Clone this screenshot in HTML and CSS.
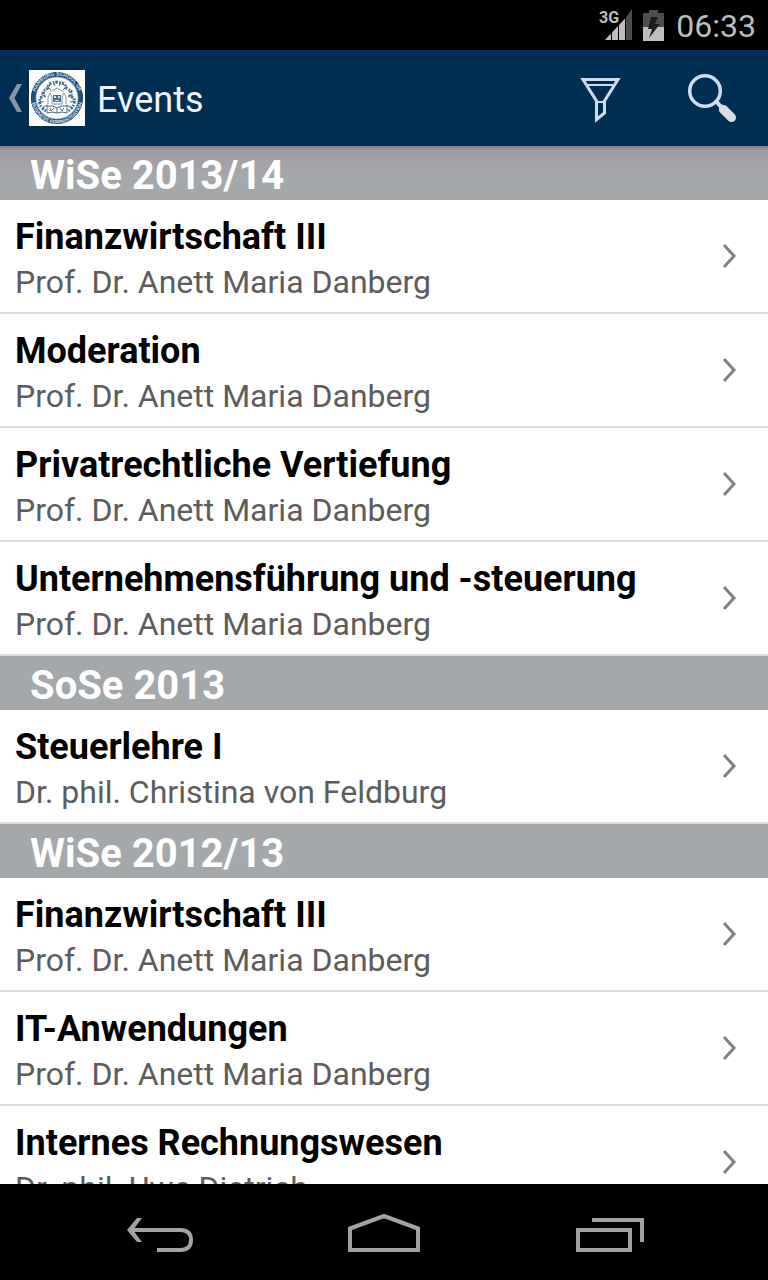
FILE: index.html
```
<!DOCTYPE html>
<html lang="de">
<head>
    <meta charset="UTF-8">
    <meta name="viewport" content="width=device-width, initial-scale=1.0">
    <title>Events</title>
    <link rel="stylesheet" href="styles.css">
</head>
<body>
    <!-- Status Bar -->
    <div class="status-bar">
        <svg class="signal" width="34" height="34" viewBox="0 0 34 34" aria-hidden="true">
            <text x="0" y="15">3G</text>
            <path fill="#bebebe" d="M6 32L12 25.500V32zM13 24.500L19 18V32H13zM20 17L26 10.500V32H20z"/>
            <path fill="#4d4d4d" d="M27 9.500L33 1V32H27z"/>
        </svg>
        <svg class="battery" width="21" height="32" viewBox="0 0 21 32" aria-hidden="true">
            <path fill="#4d4d4d" d="M0 4H6V1H15V4H21V18H0z"/>
            <path fill="#bebebe" d="M0 18H21V32H0z"/>
            <path fill="#1c1c1c" d="M8 8H15L12 15H17L6 29L9 20H5z"/>
        </svg>
        <span class="clock">06:33</span>
    </div>

    <!-- App Bar -->
    <header class="app-bar">
        <button class="up" type="button" aria-label="Zurück">
            <svg width="29" height="56" viewBox="0 0 29 56" aria-hidden="true">
                <path fill="#8296aa" d="M17 14H22L14.500 28L22 42H17L9 28z"/>
            </svg>
            <svg class="seal" width="56" height="56" viewBox="0 0 56 56" aria-hidden="true">
                <defs>
                    <path id="ring-top" d="M5.500 28A22.500 22.500 0 0 1 50.500 28"/>
                    <path id="ring-bottom" d="M2.500 28A25.500 25.500 0 0 0 53.500 28"/>
                </defs>
                <rect width="56" height="56" fill="#fff"/>
                <circle cx="28" cy="28" r="23.500" fill="none" stroke="#24507c" stroke-width="4.500"/>
                <circle cx="28" cy="28" r="25.500" fill="none" stroke="#123a66"/>
                <circle cx="28" cy="28" r="21" fill="none" stroke="#4a6e93" stroke-width="0.500"/>
                <text><textPath href="#ring-top" startOffset="50%">HAMBURG SCHOOL OF</textPath></text>
                <text><textPath href="#ring-bottom" startOffset="50%">BUSINESS ADMINISTRATION</textPath></text>
                <g fill="none" stroke="#4a6e93">
                    <path stroke-width="3" stroke-dasharray="1.500 1 2.500 1.500" d="M17 41Q9 36 11 28L15 26L14 21L19 18L20 14L28 12L36 14L37 18L42 21L41 26L45 28Q47 36 39 41"/>
                    <path stroke-width="1" d="M12 24L17 27M10 31L15 32M14 37L19 35M18 16L22 20M24 11L26 16M44 24L39 27M46 31L41 32M42 37L37 35M38 16L34 20M32 11L30 16"/>
                    <path stroke-width="1" d="M18 36V43Q23 41 28 43Q33 41 38 43V36Q33 35 28 38Q23 35 18 36M28 38V43M21 38L22 41L25 38M31 38L33 41L35 38"/>
                    <path stroke-width="1" stroke="#7d99b5" d="M19 34V27L21 23L23 27V34M33 34V27L35 23L37 27V34M21 22L28 18L35 22M23 34H33"/>
                </g>
                <path fill="#4a6e93" d="M24 25H32V32H24z"/>
                <path fill="#dce5ee" d="M25 26H27V28H25zM29 26H31V28H29zM26 30H30V31H26z"/>
            </svg>
        </button>
        <h1 class="title">Events</h1>
        <button class="action" type="button" aria-label="Filter">
            <svg width="56" height="56" viewBox="0 0 56 56" aria-hidden="true">
                <g fill="none" stroke="#cddcee" stroke-width="3">
                    <path d="M11 9.500H46L32.500 31V43L24.500 49.500V31z"/>
                    <path stroke-width="2" d="M13 15H44"/>
                    <path stroke-width="2" d="M25 32H32"/>
                </g>
            </svg>
        </button>
        <button class="action" type="button" aria-label="Suchen">
            <svg width="56" height="56" viewBox="0 0 56 56" aria-hidden="true">
                <circle cx="21" cy="21" r="15.300" fill="none" stroke="#cddcee" stroke-width="3.500"/>
                <path stroke="#cddcee" stroke-width="4" d="M32 31L37 37"/>
                <path stroke="#d7dde4" stroke-width="9" stroke-linecap="round" d="M40 40L47.500 47.500"/>
                <path fill="#d7dde4" d="M35 36L36 34L43 36L37 43L35 41z"/>
            </svg>
        </button>
    </header>

    <!-- Event List -->
    <main class="events">
        <section>
            <h2 class="semester">WiSe 2013/14</h2>
            <ul class="event-list">
                <li><a class="event" href="#">
                    <span class="event-text"><span class="event-name">Finanzwirtschaft III</span><span class="lecturer">Prof. Dr. Anett Maria Danberg</span></span>
                    <svg class="chevron" viewBox="0 0 16 26" aria-hidden="true"><path d="M2 2L12 13L2 24"/></svg>
                </a></li>
                <li><a class="event" href="#">
                    <span class="event-text"><span class="event-name">Moderation</span><span class="lecturer">Prof. Dr. Anett Maria Danberg</span></span>
                    <svg class="chevron" viewBox="0 0 16 26" aria-hidden="true"><path d="M2 2L12 13L2 24"/></svg>
                </a></li>
                <li><a class="event" href="#">
                    <span class="event-text"><span class="event-name">Privatrechtliche Vertiefung</span><span class="lecturer">Prof. Dr. Anett Maria Danberg</span></span>
                    <svg class="chevron" viewBox="0 0 16 26" aria-hidden="true"><path d="M2 2L12 13L2 24"/></svg>
                </a></li>
                <li><a class="event" href="#">
                    <span class="event-text"><span class="event-name">Unternehmensführung und -steuerung</span><span class="lecturer">Prof. Dr. Anett Maria Danberg</span></span>
                    <svg class="chevron" viewBox="0 0 16 26" aria-hidden="true"><path d="M2 2L12 13L2 24"/></svg>
                </a></li>
            </ul>
        </section>
        <section>
            <h2 class="semester">SoSe 2013</h2>
            <ul class="event-list">
                <li><a class="event" href="#">
                    <span class="event-text"><span class="event-name">Steuerlehre I</span><span class="lecturer">Dr. phil. Christina von Feldburg</span></span>
                    <svg class="chevron" viewBox="0 0 16 26" aria-hidden="true"><path d="M2 2L12 13L2 24"/></svg>
                </a></li>
            </ul>
        </section>
        <section>
            <h2 class="semester">WiSe 2012/13</h2>
            <ul class="event-list">
                <li><a class="event" href="#">
                    <span class="event-text"><span class="event-name">Finanzwirtschaft III</span><span class="lecturer">Prof. Dr. Anett Maria Danberg</span></span>
                    <svg class="chevron" viewBox="0 0 16 26" aria-hidden="true"><path d="M2 2L12 13L2 24"/></svg>
                </a></li>
                <li><a class="event" href="#">
                    <span class="event-text"><span class="event-name">IT-Anwendungen</span><span class="lecturer">Prof. Dr. Anett Maria Danberg</span></span>
                    <svg class="chevron" viewBox="0 0 16 26" aria-hidden="true"><path d="M2 2L12 13L2 24"/></svg>
                </a></li>
                <li><a class="event" href="#">
                    <span class="event-text"><span class="event-name">Internes Rechnungswesen</span><span class="lecturer">Dr. phil. Uwe Dietrich</span></span>
                    <svg class="chevron" viewBox="0 0 16 26" aria-hidden="true"><path d="M2 2L12 13L2 24"/></svg>
                </a></li>
            </ul>
        </section>
    </main>

    <!-- Navigation Bar -->
    <nav class="nav-bar">
        <button type="button" aria-label="Zurück">
            <svg width="72" height="48" viewBox="0 0 72 48" aria-hidden="true">
                <path d="M9 22H58Q69 22 69 32Q69 42 58 42H35"/>
                <path class="arrow-head" d="M5 22L15 10H20L11 22L20 34H15z"/>
            </svg>
        </button>
        <button type="button" aria-label="Startseite">
            <svg width="72" height="48" viewBox="0 0 72 48" aria-hidden="true">
                <path d="M2 42V20.500L36 8L70 20.500V42z"/>
            </svg>
        </button>
        <button type="button" aria-label="Letzte Apps">
            <svg width="72" height="48" viewBox="0 0 72 48" aria-hidden="true">
                <path d="M4 22H56V42H4zM18 12H68V34"/>
            </svg>
        </button>
    </nav>
</body>
</html>
```
FILE: styles.css
```
body, html {
    margin: 0;
    padding: 0;
    height: 100%;
    font-family: Roboto, sans-serif;
}
* {
    box-sizing: border-box;
}
body {
    display: flex;
    flex-direction: column;
    background: #fff;
}
button {
    padding: 0;
    border: none;
    background: none;
    cursor: pointer;
}
svg {
    display: block;
    flex: none;
}
.status-bar {
    display: flex;
    flex: none;
    align-items: center;
    justify-content: flex-end;
    gap: 10px;
    height: 50px;
    padding-right: 12px;
    background: #000;
    color: #bebebe;
}
.signal text {
    font-size: 16px;
    font-weight: 700;
    fill: #bebebe;
}
.clock {
    font-size: 32px;
    line-height: 48px;
    padding-top: 2px;
    margin-left: 2px;
}
.app-bar {
    display: flex;
    flex: none;
    align-items: center;
    height: 96px;
    background: linear-gradient(#003060, #002d52 6px);
    color: #f0f5fc;
}
.up {
    display: flex;
}
.seal text {
    font-size: 5px;
    font-weight: 700;
    fill: #d5e0ea;
    text-anchor: middle;
}
.title {
    flex: 1;
    margin: 0;
    padding: 4px 0 0 12px;
    font-size: 36px;
    font-weight: 400;
}
.action {
    display: flex;
    justify-content: center;
    width: 112px;
}
.events {
    flex: 1;
    min-height: 0;
    overflow: hidden;
}
.semester {
    margin: 0;
    padding: 6px 30px 0;
    background: #a4a8aa;
    color: #fff;
    font-size: 40px;
    font-weight: 700;
    line-height: 48px;
}
/* shadow cast by the app bar */
.events section:first-child .semester {
    background: linear-gradient(#7f7f84, #a09b9d 5px, #a3a0a5 14px, #a4a8aa 28px);
}
.event-list {
    margin: 0;
    padding: 0;
    list-style: none;
}
.event {
    display: flex;
    align-items: center;
    padding: 0 30px 0 15px;
    border-bottom: 2px solid #dcdcdc;
    color: #000;
    text-decoration: none;
}
.event-text {
    display: flex;
    flex: 1;
    flex-direction: column;
    padding: 14px 0 8px;
}
.event-name {
    font-size: 36px;
    font-weight: 700;
    line-height: 46px;
}
.lecturer {
    color: #5c5c5c;
    font-size: 32px;
    line-height: 44px;
}
.chevron {
    width: 16px;
    height: 26px;
    fill: none;
    stroke: #808080;
    stroke-width: 3;
}
.nav-bar {
    display: flex;
    flex: none;
    align-items: center;
    justify-content: center;
    gap: 40px;
    height: 96px;
    background: #000;
}
.nav-bar svg {
    margin: auto;
    fill: none;
    stroke: #a3a3a3;
    stroke-width: 4;
}
.nav-bar .arrow-head {
    fill: #a3a3a3;
    stroke: none;
}
.nav-bar button {
    width: 186px;
}
```
